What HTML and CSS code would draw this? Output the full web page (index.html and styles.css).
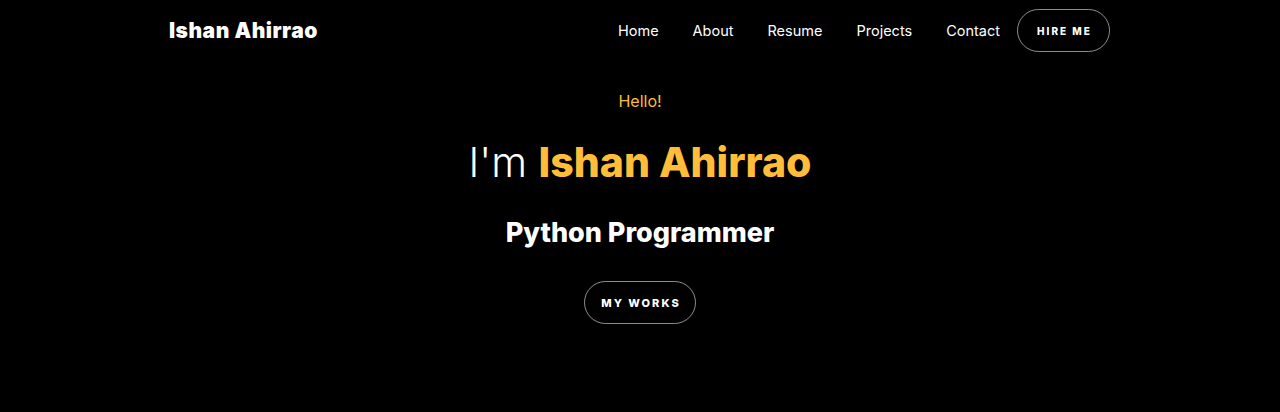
FILE: index.html
```html
<!DOCTYPE html>
<html lang="en">
<head>
<meta charset="utf-8">
<title>Ishan Ahirrao</title>
<link rel="stylesheet" href="styles.css">
</head>
<body>
<header class="navbar">
  <div class="container nav-inner">
    <a class="brand" href="#">Ishan Ahirrao</a>
    <nav class="nav-links">
      <a href="#">Home</a>
      <a href="#">About</a>
      <a href="#">Resume</a>
      <a href="#">Projects</a>
      <a href="#">Contact</a>
      <a class="btn btn-hire" href="#">HIRE ME</a>
    </nav>
  </div>
</header>
<section class="hero">
  <span class="hello">Hello!</span>
  <h1 class="title">I'm <span class="accent">Ishan Ahirrao</span></h1>
  <h2 class="subtitle">Python Programmer</h2>
  <a class="btn btn-works" href="#">MY WORKS</a>
</section>
</body>
</html>
```
FILE: styles.css
```css
* { box-sizing: border-box; }
html, body {
  margin: 0;
  padding: 0;
  background: #000;
  color: #fff;
  font-family: "Inter", "Open Sans", sans-serif;
  height: 100%;
}
a { color: #fff; text-decoration: none; }
.container {
  width: 940px;
  margin: 0 auto;
}
.navbar { padding-top: 9px; }
.nav-inner {
  display: flex;
  align-items: center;
  justify-content: space-between;
  height: 43px;
}
.brand {
  font-size: 21px;
  font-weight: 900;
  letter-spacing: 0.5px;
  margin-left: -1px;
}
.nav-links {
  display: flex;
  align-items: center;
}
.nav-links a {
  font-size: 14.5px;
  font-weight: 400;
  padding: 0 17px;
}
.btn {
  display: inline-flex;
  align-items: center;
  justify-content: center;
  border: 1px solid rgba(255,255,255,0.55);
  border-radius: 30px;
  font-size: 11px;
  font-weight: 800;
  letter-spacing: 2px;
}
.nav-links a.btn-hire {
  width: 93px;
  height: 43px;
  padding: 0 0 0 2px;
  font-size: 10px;
  font-weight: 800;
  margin-left: 0;
}
.hero {
  display: flex;
  flex-direction: column;
  align-items: center;
  padding-top: 37px;
}
.hello {
  color: #ffbd39;
  font-size: 16px;
  line-height: 24px;
}
.title {
  margin: 24px 0 0;
  font-size: 41px;
  font-weight: 300;
  line-height: 50px;
}
.accent {
  color: #ffbd39;
  font-weight: 800;
}
.subtitle {
  margin: 28px 0 0;
  font-size: 27px;
  font-weight: 800;
  line-height: 36px;
}
.btn-works {
  margin-top: 30px;
  width: 112px;
  height: 43px;
  padding-left: 2px;
}
```
